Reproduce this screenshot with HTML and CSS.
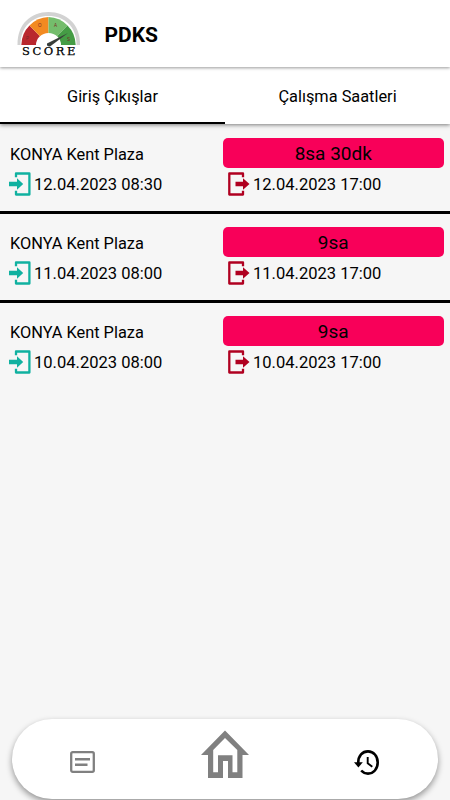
FILE: index.html
```html
<!DOCTYPE html>
<html lang="tr">
<head>
<meta charset="utf-8">
<title>PDKS</title>
<link rel="stylesheet" href="styles.css">
</head>
<body>
<svg class="defs" width="0" height="0">
  <symbol id="in" viewBox="0 0 22 24"><path d="M7 5.200V1.500H20.400V22.500H7V18.800" fill="none" stroke="currentColor" stroke-width="2.300" stroke-linejoin="round"/><path d="M0 9.800H8V6.200L14.200 12L8 17.800V14.200H0Z" fill="currentColor"/></symbol>
  <symbol id="out" viewBox="0 0 22 24"><path d="M15 5.200V1.500H1.300V22.500H15V18.800" fill="none" stroke="currentColor" stroke-width="2.300" stroke-linejoin="round"/><path d="M7.500 9.800H15V6.200L21.500 12L15 17.800V14.200H7.500Z" fill="currentColor"/></symbol>
</svg>
<div class="app">
  <header class="bar">
    <svg class="logo" viewBox="0 0 64 46" width="64" height="46">
      <path d="M0.500 34C0 13 14 1 31.500 1S63.500 13 63 34Z" fill="#d2d2d2"/>
      <path d="M3.500 34C3.500 15 16 5 31.500 5S59.500 15 59.500 34Z" fill="#fff"/>
      <path d="M31.500 34H4.300A27.500 28 0 0 1 12.500 14.500Z" fill="#b9272d"/>
      <path d="M31.500 34L12.500 14.500A27.500 28 0 0 1 31.500 6Z" fill="#f28a21"/>
      <path d="M31.500 34V6A27.500 28 0 0 1 50.500 14.500Z" fill="#74bd6c"/>
      <path d="M31.500 34L50.500 14.500A27.500 28 0 0 1 58.700 34Z" fill="#459c45"/>
      <path d="M19 34A12.500 12 0 0 1 44 34Z" fill="#fff"/>
      <g class="marks"><text x="9" y="29">P</text><text x="21" y="16">O</text><text x="37" y="16">A</text><text x="50" y="30">S</text></g>
      <text class="word" x="5" y="44" textLength="53.500">SCORE</text>
      <path d="M30 32.500L51 22L33 35.500Q29.500 36 30 32.500Z" fill="#383d3a"/>
    </svg>
    <h1>PDKS</h1>
  </header>
  <nav class="tabs"><div class="tab active">Giriş Çıkışlar</div><div class="tab">Çalışma Saatleri</div></nav>
  <main>
    <section class="row">
      <div class="place">KONYA Kent Plaza</div><div class="pill">8sa 30dk</div>
      <div class="time"><svg class="enter"><use href="#in"/></svg>12.04.2023 08:30</div><div class="time exit"><svg class="leave"><use href="#out"/></svg>12.04.2023 17:00</div>
    </section>
    <section class="row">
      <div class="place">KONYA Kent Plaza</div><div class="pill">9sa</div>
      <div class="time"><svg class="enter"><use href="#in"/></svg>11.04.2023 08:00</div><div class="time exit"><svg class="leave"><use href="#out"/></svg>11.04.2023 17:00</div>
    </section>
    <section class="row">
      <div class="place">KONYA Kent Plaza</div><div class="pill">9sa</div>
      <div class="time"><svg class="enter"><use href="#in"/></svg>10.04.2023 08:00</div><div class="time exit"><svg class="leave"><use href="#out"/></svg>10.04.2023 17:00</div>
    </section>
  </main>
  <footer class="dock">
    <svg class="note" viewBox="0 0 25 22" width="25" height="22" fill="none" stroke="#808080"><rect x="1.200" y="1.200" width="22.600" height="19.600" rx="1.500" stroke-width="2.300"/><path d="M5 8.200H20M5 13.700H17.500" stroke-width="2.500"/></svg>
    <svg class="home" viewBox="0 0 48 48" width="48" height="48"><path d="M24 0.500L48 25H41.500V48H27V31H22V48H7V25H0ZM24 8L12.200 20V42.300H17V25.200H31.500V42.300H36.300V20Z" fill="#808080" fill-rule="evenodd"/></svg>
    <svg class="history" viewBox="0 0 25 25" width="25" height="25" fill="none" stroke="#000"><path d="M4.200 13C4.200 5.500 8.500 1.400 14 1.400S23.700 6 23.700 12.500S19.500 23.600 14 23.600Q10 23.600 7.200 20.500" stroke-width="2.600"/><path d="M0 12.300H8.800L4.400 17.600Z" fill="#000" stroke="none"/><path d="M13.700 7V13.300L18.300 16.800" stroke-width="1.900"/></svg>
  </footer>
</div>
</body>
</html>
```
FILE: styles.css
```css
* { box-sizing: border-box; }
body { margin: 0; background: #f6f6f6; font-family: Roboto, sans-serif; color: #000; }
.defs { position: absolute; }
.app { height: 800px; display: flex; flex-direction: column; overflow: hidden; }
.bar { height: 67px; flex: none; background: #fff; display: flex; align-items: flex-start; padding: 11px 0 0 17px; box-shadow: 0 1px 3px rgba(0,0,0,.4); z-index: 2; }
.logo { flex: none; }
.marks { font: 4.500px "Liberation Sans", sans-serif; fill: #7b2525; }
.word { font: 11.500px "DejaVu Serif", serif; fill: #000; stroke: #000; stroke-width: .25px; }
h1 { margin: 11px 0 0 23.500px; font-size: 21px; line-height: 26px; font-weight: 700; }
.tabs { height: 57px; flex: none; display: flex; background: #fff; box-shadow: 0 1px 4px rgba(0,0,0,.5); z-index: 1; }
.tab { flex: 1; text-align: center; font-size: 16.350px; line-height: 60px; }
.active { border-bottom: 2px solid #000; }
main { padding-top: .5px; }
.row { height: 89px; display: grid; grid-template-columns: 222.500px 221.500px; grid-template-rows: 30.500px 24px; row-gap: 4px; padding-top: 13px; position: relative; }
.row:not(:last-child)::after { content: ""; position: absolute; left: 0; right: 0; bottom: 0; height: 2.400px; background: #000; }
.place { padding-left: 10px; font-size: 16.350px; line-height: 34px; }
.pill { background: #f80059; border-radius: 5px; text-align: center; font-size: 19px; line-height: 32px; }
.time { display: flex; align-items: center; gap: 3px; padding-left: 9px; font-size: 16.550px; line-height: 25px; white-space: nowrap; }
.exit { padding-left: 5.500px; }
.time svg { width: 22px; height: 24px; flex: none; }
.enter { color: #10b1a0; }
.leave { color: #b00020; }
.dock { margin: auto 12px 1.500px; width: 426px; height: 80px; flex: none; background: #fff; border-radius: 40px; display: flex; justify-content: space-between; align-items: flex-start; padding: 0 59px 0 58px; box-shadow: 0 3px 6px rgba(0,0,0,.4); }
.note { margin-top: 32px; }
.home { margin-top: 11.500px; }
.history { margin-top: 31px; }
```
